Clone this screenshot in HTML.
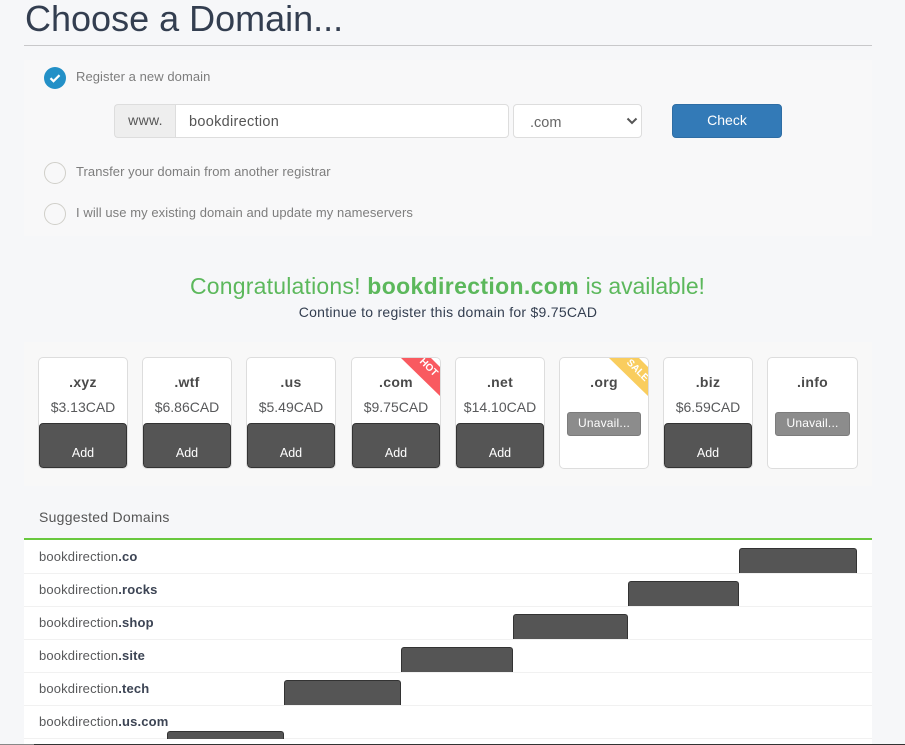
<!DOCTYPE html>
<html><head><meta charset="utf-8"><style>
html,body{margin:0;padding:0}
body{width:905px;height:745px;position:relative;overflow:hidden;background:#f6f7f9;font-family:"Liberation Sans",sans-serif;color:#58595b}
.a{position:absolute;white-space:nowrap}
.box{position:absolute;box-sizing:border-box}
.radio{position:absolute;left:44px;width:22px;height:22px;box-sizing:border-box;border:1px solid #d0cfc9;border-radius:50%}
.lbl{left:76px;font-size:13px;line-height:16px;color:#7d7d7d;letter-spacing:.07px}
.card{position:absolute;top:357px;height:112px;width:90px;box-sizing:border-box;background:#fff;border:1px solid #ddd;border-radius:5px;overflow:hidden}
.tld{position:absolute;left:0;right:0;top:15px;text-align:center;font-weight:bold;font-size:14px;line-height:18px;color:#4a4a4a;letter-spacing:.3px}
.pr{position:absolute;left:0;right:0;top:40px;text-align:center;font-size:14px;line-height:18px;color:#58595b}
.add{position:absolute;left:0;right:0;top:65px;height:45px;box-sizing:border-box;background:#555;border:1px solid #333;border-radius:4px;color:#fff;font-size:12.5px;text-align:center;line-height:58px}
.un{position:absolute;left:7px;right:7px;top:54px;height:24px;box-sizing:border-box;background:#8c8c8c;border:1px solid #7c7c7c;border-radius:3px;color:#fff;font-size:12px;text-align:center;line-height:21px;letter-spacing:.2px}
.row{position:absolute;left:24px;width:848px;height:32px;border-bottom:1px solid #f1f1f1;background:#fff}
.dom{left:39px;font-size:13px;line-height:16px;color:#58595b;letter-spacing:.15px}
.dom b{color:#3c4454}
.sb{position:absolute;height:25px;box-sizing:border-box;background:#555;border:1px solid #333;border-bottom:0;border-radius:3px 3px 0 0}
.rib{position:absolute;color:#fff;font-weight:bold;font-size:10px;line-height:10px;transform:rotate(45deg);text-align:center}
</style></head><body>
<div class="a" style="left:25px;top:-3px;font-size:36px;line-height:44px;color:#333e50">Choose a Domain...</div>
<div class="box" style="left:24px;top:45px;width:848px;height:1px;background:#c8c8ca"></div>
<div class="box" style="left:24px;top:60px;width:848px;height:176px;background:#f8f8f9"></div>

<div class="box" style="left:44px;top:67px;width:22px;height:22px;border-radius:50%;background:#2390c7"></div>
<svg class="a" style="left:44px;top:67px" width="22" height="22" viewBox="0 0 22 22"><path d="M6.5 11.2l3 3 6-6" fill="none" stroke="#fff" stroke-width="2.2"/></svg>
<div class="a lbl" style="top:69px">Register a new domain</div>

<div class="box" style="left:114px;top:104px;width:62px;height:34px;background:#eee;border:1px solid #ddd;border-right:0;border-radius:4px 0 0 4px;font-size:14px;line-height:30px;text-align:center;color:#555;letter-spacing:.3px">www.</div>
<div class="box" style="left:175px;top:104px;width:334px;height:34px;background:#fff;border:1px solid #ddd;border-radius:0 4px 4px 0;font-size:14.5px;line-height:31px;padding-left:13px;color:#555;letter-spacing:.3px;padding-top:2px">bookdirection</div>
<div class="box" style="left:513px;top:104px;width:129px;height:34px;background:#fff;border:1px solid #ddd;border-radius:4px;font-size:14.5px;line-height:35px;padding-left:16px;padding-top:1px;color:#666">.com</div>
<svg class="a" style="left:626px;top:117px" width="12" height="8" viewBox="0 0 12 8"><path d="M1.5 1.5l4.5 4.5 4.5-4.5" fill="none" stroke="#555" stroke-width="2"/></svg>
<div class="box" style="left:672px;top:104px;width:110px;height:34px;background:#337ab7;border:1px solid #2e6da4;border-radius:4px;color:#fff;font-size:14px;line-height:31px;text-align:center">Check</div>

<div class="radio" style="top:162px"></div>
<div class="a lbl" style="top:164px">Transfer your domain from another registrar</div>
<div class="radio" style="top:203px"></div>
<div class="a lbl" style="top:205px">I will use my existing domain and update my nameservers</div>

<div class="a" style="left:190px;top:272px;font-size:23px;line-height:28px;color:#5cb85c;letter-spacing:.2px">Congratulations! <b style="letter-spacing:.35px">bookdirection.com</b> <span style="letter-spacing:-.07px">is available!</span></div>
<div class="a" style="left:0;width:896px;top:304px;text-align:center;font-size:14px;line-height:17px;color:#333e50;letter-spacing:.27px">Continue to register this domain for $9.75CAD</div>

<div class="box" style="left:24px;top:342px;width:848px;height:144px;background:#f8f8f8"></div>

<div class="card" style="left:38px"><div class="tld">.xyz</div><div class="pr">$3.13CAD</div><div class="add">Add</div></div>
<div class="card" style="left:142px"><div class="tld">.wtf</div><div class="pr">$6.86CAD</div><div class="add">Add</div></div>
<div class="card" style="left:246px"><div class="tld">.us</div><div class="pr">$5.49CAD</div><div class="add">Add</div></div>
<div class="card" style="left:351px"><div class="tld">.com</div><div class="pr">$9.75CAD</div><div class="add">Add</div>
<svg class="a" style="left:49px;top:0" width="40" height="40"><path d="M0 0H30L40 10V39Z" fill="#f95a60"/></svg>
<div class="rib" style="left:61px;top:5px;width:30px">HOT</div></div>
<div class="card" style="left:455px"><div class="tld">.net</div><div class="pr">$14.10CAD</div><div class="add">Add</div></div>
<div class="card" style="left:559px"><div class="tld">.org</div><div class="un">Unavail...</div>
<svg class="a" style="left:49px;top:0" width="40" height="40"><path d="M0 0H30L40 10V39Z" fill="#f9cd5e"/></svg>
<div class="rib" style="left:62px;top:8px;width:30px">SALE</div></div>
<div class="card" style="left:663px"><div class="tld">.biz</div><div class="pr">$6.59CAD</div><div class="add">Add</div></div>
<div class="card" style="left:767px;width:91px"><div class="tld">.info</div><div class="un">Unavail...</div></div>

<div class="a" style="left:39px;top:509px;font-size:14px;line-height:16px;color:#555;letter-spacing:.27px">Suggested Domains</div>
<div class="box" style="left:24px;top:538px;width:848px;height:2px;background:#69c83e"></div>
<div class="row" style="top:540px;height:33px"></div>
<div class="row" style="top:574px"></div>
<div class="row" style="top:607px"></div>
<div class="row" style="top:640px"></div>
<div class="row" style="top:673px"></div>
<div class="row" style="top:706px"></div>
<div class="box" style="left:24px;top:739px;width:848px;height:5px;background:#fff"></div>

<div class="a dom" style="top:549px">bookdirection<b>.co</b></div>
<div class="a dom" style="top:582px">bookdirection<b>.rocks</b></div>
<div class="a dom" style="top:615px">bookdirection<b>.shop</b></div>
<div class="a dom" style="top:648px">bookdirection<b>.site</b></div>
<div class="a dom" style="top:681px">bookdirection<b>.tech</b></div>
<div class="a dom" style="top:714px">bookdirection<b>.us.com</b></div>

<div class="sb" style="left:739px;top:548px;width:118px"></div>
<div class="sb" style="left:628px;top:581px;width:111px"></div>
<div class="sb" style="left:513px;top:614px;width:115px"></div>
<div class="sb" style="left:401px;top:647px;width:112px"></div>
<div class="sb" style="left:284px;top:680px;width:117px"></div>
<div class="sb" style="left:167px;top:731px;width:117px;height:8px"></div>

<div class="box" style="left:0;top:744px;width:905px;height:1px;background:#333"></div>
<div class="box" style="left:0;top:744px;width:34px;height:1px;background:#888"></div>
</body></html>
